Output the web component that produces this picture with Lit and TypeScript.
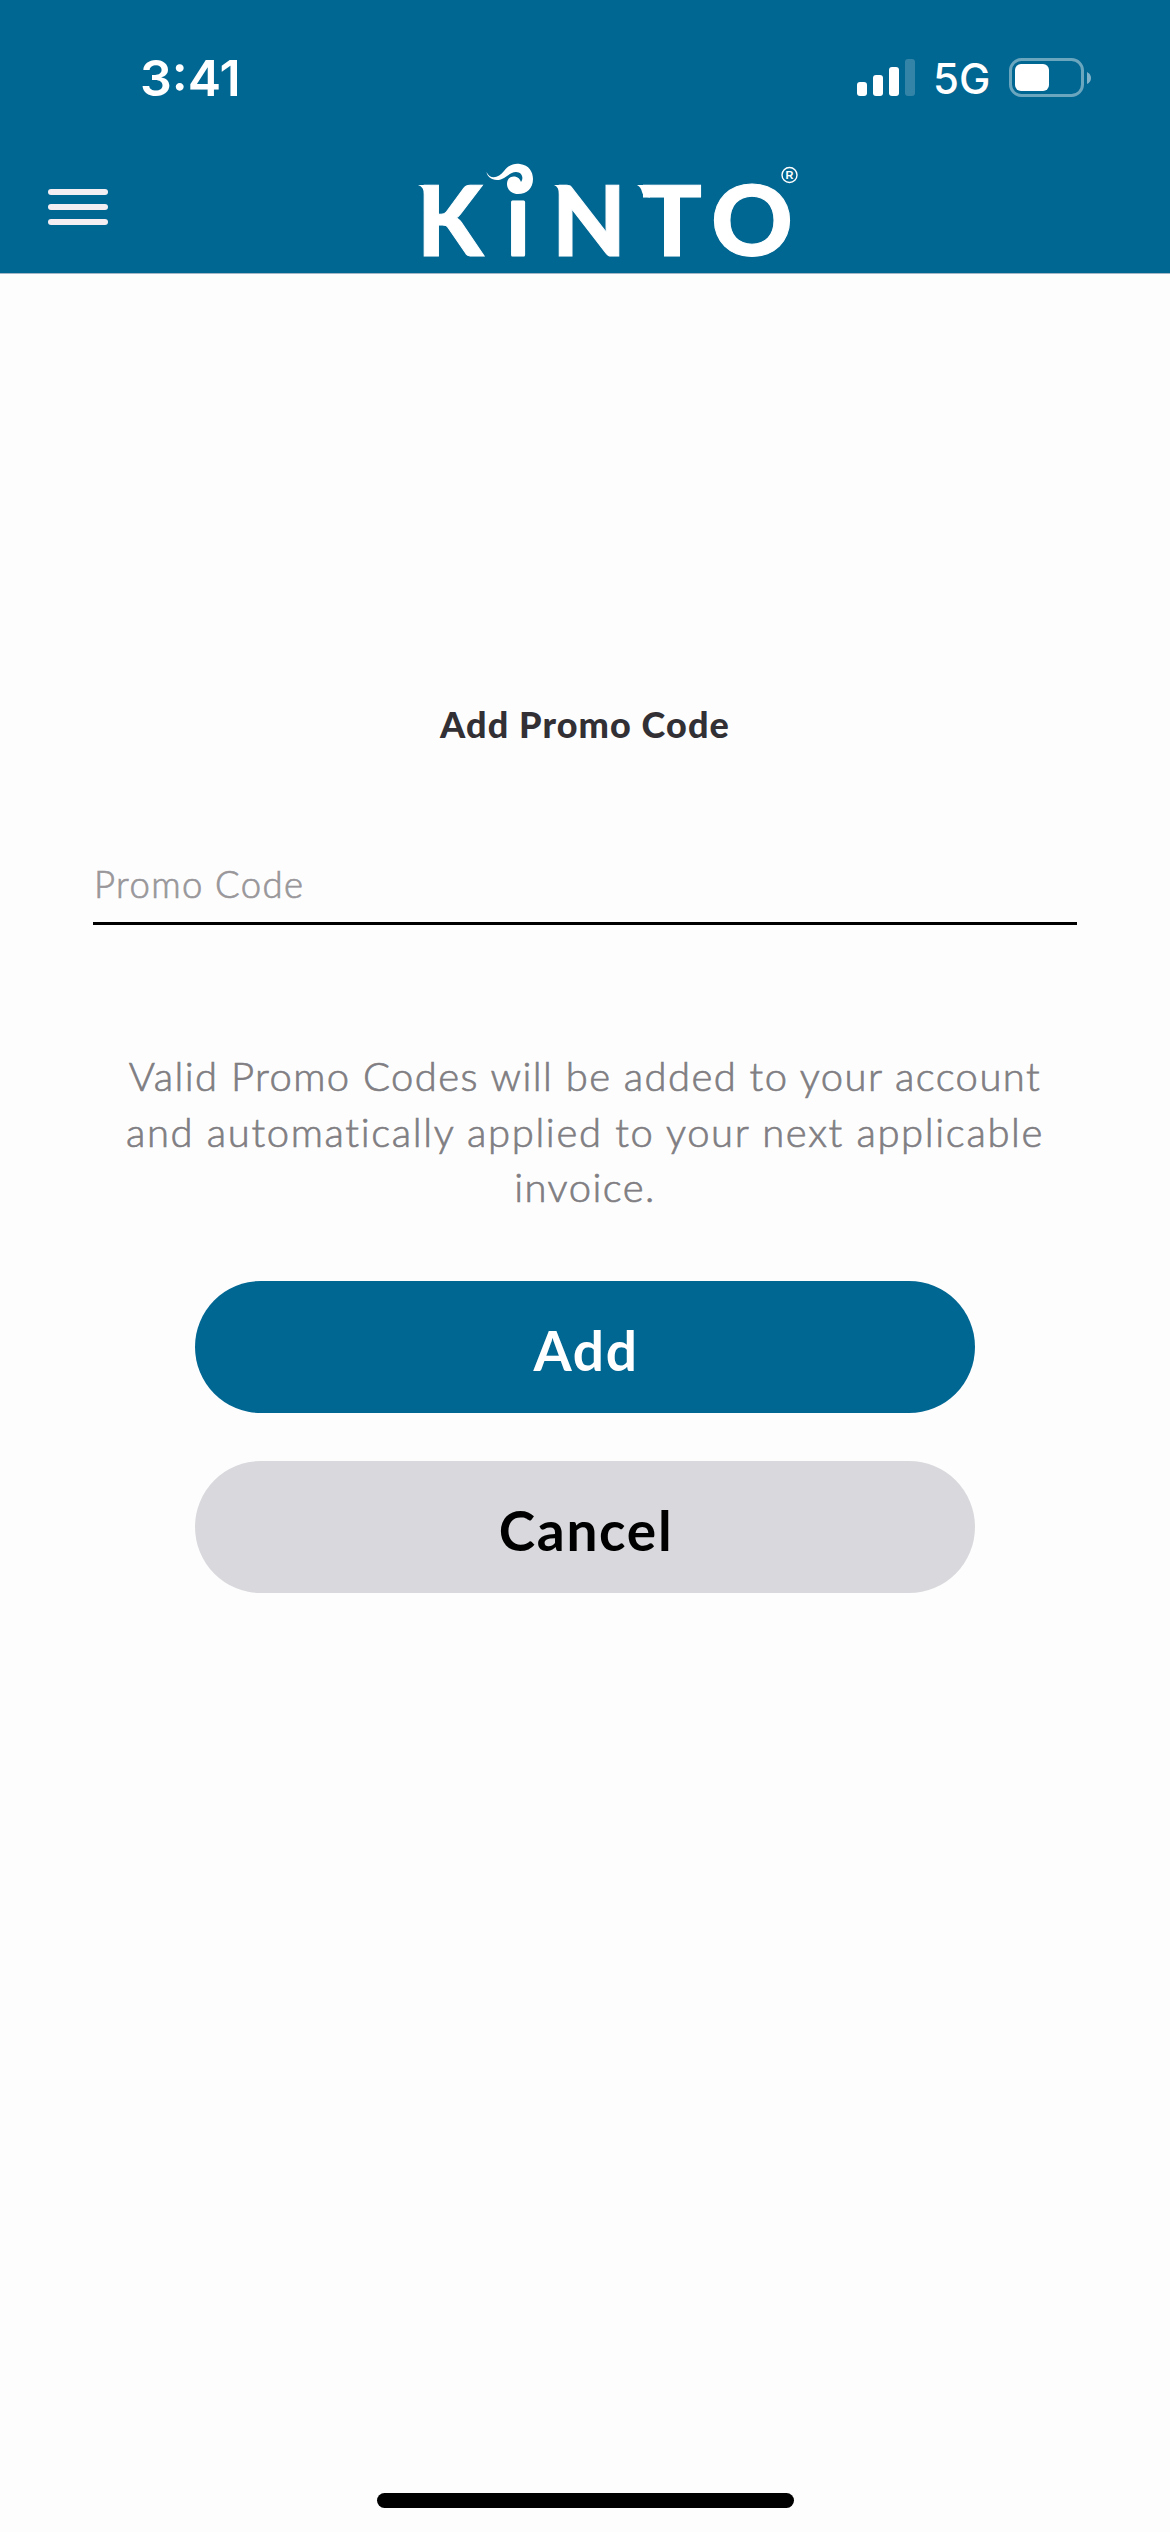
import { LitElement, html, css } from "lit";
import { customElement } from "lit/decorators.js";

@customElement("status-bar")
class StatusBar extends LitElement {
  static styles = css`
    :host { display: flex; height: 156px; box-sizing: border-box; padding: 0 78px 0 140px; justify-content: space-between; align-items: center; color: #fff; font-family: Inter, sans-serif; }
    .time { font-size: 50px; font-weight: 600; line-height: 60px; }
    .right { display: flex; align-items: center; }
    .net { font-size: 42px; font-weight: 500; line-height: 50px; margin: 1px 0 0 17px; width: 76px; }
    svg { display: block; }
  `;
  render() {
    return html`
      <span class="time">3:41</span>
      <div class="right">
        <svg width="60" height="40" viewBox="0 0 60 40" fill="#fff">
          <rect x="1" y="24" width="10" height="14" rx="3" />
          <rect x="17" y="17" width="10" height="21" rx="3" />
          <rect x="33" y="9" width="10" height="29" rx="3" />
          <rect x="49" y="1" width="10" height="37" rx="3" opacity=".2" />
        </svg>
        <span class="net">5G</span>
        <svg width="83" height="40" viewBox="0 0 83 40">
          <rect x="1.5" y="1.5" width="72" height="36" rx="11" fill="none" stroke="#fff" stroke-opacity=".42" stroke-width="3" />
          <rect x="6" y="6" width="34" height="27" rx="6" fill="#fff" />
          <path d="M78 14 Q82 16 82 20 T78 26Z" fill="#fff" opacity=".5" />
        </svg>
      </div>`;
  }
}

@customElement("nav-bar")
class NavBar extends LitElement {
  static styles = css`
    :host { display: flex; height: 117px; box-sizing: border-box; padding-left: 48px; }
    .menu { display: flex; flex-direction: column; gap: 9px; width: 60px; padding-top: 33px; }
    .line { height: 6px; border-radius: 3px; background: #f4eef3; }
    .logo { display: block; margin-left: 302px; overflow: visible; }
    .word { font-family: Lato, sans-serif; font-weight: 900; fill: #fff; stroke: #fff; stroke-width: 1px; font-size: 97.500px; }
    .stem { font-size: 73px; stroke-width: 3px; stroke-linejoin: round; }
    .mark { font-family: "Liberation Sans", sans-serif; font-size: 11px; font-weight: 700; fill: #fff; }
  `;
  render() {
    return html`
      <div class="menu"><div class="line"></div><div class="line"></div><div class="line"></div></div>
      <svg class="logo" width="400" height="117" viewBox="410 156 400 117">
        <g class="word">
          <text x="417" y="255.600" textLength="66" lengthAdjust="spacingAndGlyphs">K</text>
          <text class="stem" x="518" y="254.500" text-anchor="middle">I</text>
          <text x="552" y="255.600" textLength="74" lengthAdjust="spacingAndGlyphs">N</text>
          <text x="642" y="255.600" textLength="60" lengthAdjust="spacingAndGlyphs">T</text>
          <text x="711" y="255.600" textLength="82" lengthAdjust="spacingAndGlyphs">O</text>
        </g>
        <g fill="#fff">
          <path d="M418 185H430V194H424Q424 187 418 185Z" />
          <path d="M554 185H566V194H559Q559 187 554 185Z" />
          <path d="M637 185H650V197.500Q643 197 642 192Q641 187 637 185Z" />
          <path d="M486.500 172C490 180 499 178 504 171C509 164 516 163 520 164C529 165 533 172 533 179C533 188 527 194 518 194C511 194 507 189 507 184C507 178 511 176 515 176.500C518 177 520 179 521 182C524 178 522 172 516 172C509 172 505 180 497 180C491 180 487 176 486.500 172Z" />
        </g>
        <circle cx="789.500" cy="175" r="7.500" fill="none" stroke="#fff" stroke-width="1.400" />
        <text class="mark" x="785.500" y="179">R</text>
      </svg>`;
  }
}

@customElement("app-root")
class AppRoot extends LitElement {
  static styles = css`
    :host { display: flex; flex-direction: column; height: 2532px; background: #fdfdfe; font-family: Lato, sans-serif; }
    .head { background: #006692; height: 273px; border-bottom: 1px solid #a3b8c6; }
    .form { display: flex; flex-direction: column; align-items: center; padding: 425px 93px 0; }
    .title { margin: 0; font-size: 36px; font-weight: 900; line-height: 50px; letter-spacing: 1.100px; color: #323034; }
    .code { box-sizing: border-box; width: 984px; height: 81px; margin-top: 95px; padding: 2px 0 0 1px; border: 0; border-bottom: 3px solid #000; border-radius: 0; background: none; font: 300 36.500px Lato, sans-serif; letter-spacing: 1.400px; outline: 0; }
    .code::placeholder { color: #99979a; opacity: 1; -webkit-text-stroke: .7px #99979a; }
    .note { margin: 124px 0 0; text-align: center; font-size: 40px; font-weight: 300; line-height: 55.500px; letter-spacing: 1.440px; color: #807e82; -webkit-text-stroke: .7px #807e82; white-space: nowrap; }
    .wide { letter-spacing: 1.650px; }
    .btn { box-sizing: border-box; width: 780px; height: 132px; border: 0; border-radius: 66px; padding: 6px 0 0 2px; font: 700 55px Lato, sans-serif; letter-spacing: 1.700px; }
    .add { margin-top: 65.500px; background: #006692; color: #fff; }
    .cancel { margin-top: 48px; background: #d9d8dc; color: #000; }
    .home { width: 417px; height: 15px; margin: auto auto 24px; border-radius: 8px; background: #000; }
  `;
  render() {
    return html`
      <header class="head"><status-bar></status-bar><nav-bar></nav-bar></header>
      <main class="form">
        <h1 class="title">Add Promo Code</h1>
        <input class="code" placeholder="Promo Code" />
        <p class="note">Valid Promo Codes will be added to your account<br /><span class="wide">and automatically applied to your next applicable</span><br />invoice.</p>
        <button class="btn add">Add</button>
        <button class="btn cancel">Cancel</button>
      </main>
      <div class="home"></div>`;
  }
}
